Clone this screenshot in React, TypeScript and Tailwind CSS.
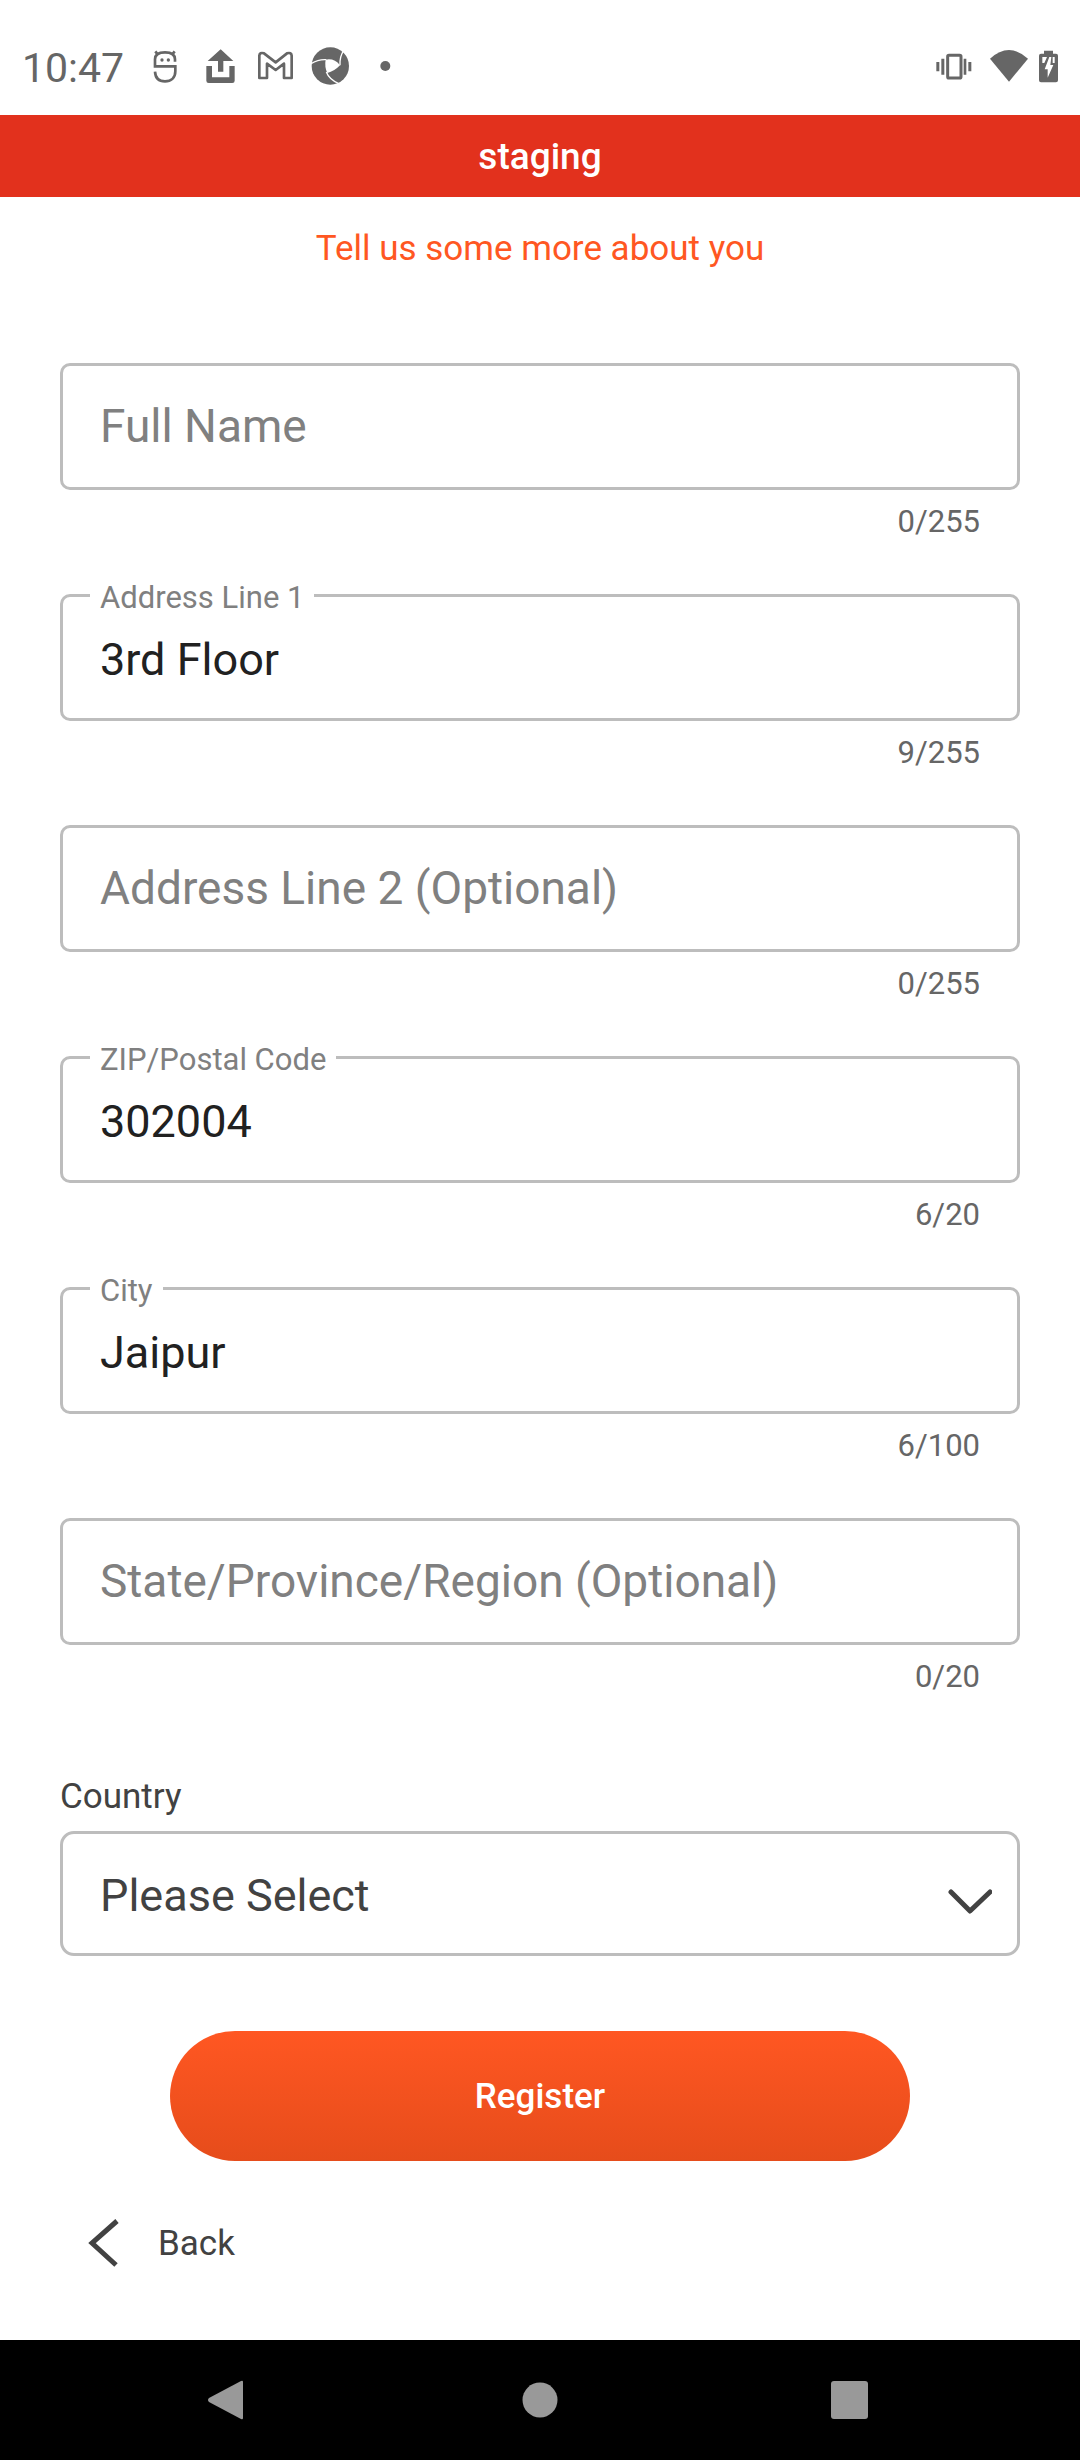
import { useState, type ReactNode } from "react";

type FieldData = { id: string; label: string; initial: string; max: number };

const fields: FieldData[] = [
  { id: "full-name", label: "Full Name", initial: "", max: 255 },
  { id: "address-1", label: "Address Line 1", initial: "3rd Floor", max: 255 },
  { id: "address-2", label: "Address Line 2 (Optional)", initial: "", max: 255 },
  { id: "postal-code", label: "ZIP/Postal Code", initial: "302004", max: 20 },
  { id: "city", label: "City", initial: "Jaipur", max: 100 },
  { id: "state", label: "State/Province/Region (Optional)", initial: "", max: 20 },
];

function StatusIcon({ children }: { children: ReactNode }) {
  return (
    <svg viewBox="0 0 117 117" className="size-[39px]" fill="none" aria-hidden="true">
      {children}
    </svg>
  );
}

function StatusBar() {
  return (
    <div className="flex h-[115px] items-center justify-between pt-4 pr-[22px] pl-[22px] text-[#666666]">
      <div className="flex items-center gap-4">
        <span className="w-[108px] pt-1 text-[41px] leading-[48px]">10:47</span>
        <StatusIcon>
          <g stroke="currentColor" strokeWidth="8">
            <path d="M87 47V40C87 26 76 19 57 19S27 26 27 40V61H88V76C88 95 75 106 57 106S28 96 27 77" />
            <path d="M28 16L35 25M86 16L79 25" />
          </g>
          <circle cx="48" cy="42" r="5" fill="currentColor" />
          <circle cx="67" cy="42" r="5" fill="currentColor" />
        </StatusIcon>
        <StatusIcon>
          <path
            fill="currentColor"
            d="M59 10L97 45H67V77H51V45H20ZM16 60H33V94H85V60H101V104Q101 111 94 111H23Q16 111 16 104Z"
          />
        </StatusIcon>
        <StatusIcon>
          <path
            d="M10 96V29Q11 18 24 22L59 49L93 22Q106 18 107 29V96H84V53L59 72L33 53V96Z"
            stroke="currentColor"
            strokeWidth="8"
            strokeLinejoin="round"
          />
        </StatusIcon>
        <StatusIcon>
          <circle cx="58" cy="60" r="56" fill="currentColor" />
          <path d="M44 41Q70 36 87 58Q70 76 49 81Q40 62 44 41Z" fill="white" />
          <g stroke="white" strokeWidth="4">
            <path d="M0 53C18 42 32 40 46 41" />
            <path d="M98 14C88 28 86 40 87 58" />
            <path d="M46 78C52 94 64 104 82 112" />
          </g>
        </StatusIcon>
        <StatusIcon>
          <circle cx="58" cy="60" r="15" fill="currentColor" />
        </StatusIcon>
      </div>
      <div className="flex items-center">
        <svg viewBox="0 0 108 117" className="mr-[18px] h-[39px] w-9" fill="currentColor" aria-hidden="true">
          <path d="M1 48H10V76H1ZM16 38H25V86H16ZM83 38H91V86H83ZM97 48H106V76H97Z" />
          <rect x="35" y="28" width="40" height="68" rx="4" fill="none" stroke="currentColor" strokeWidth="9" />
        </svg>
        <svg viewBox="0 0 114 117" className="mr-[11px] h-[39px] w-[38px]" fill="currentColor" aria-hidden="true">
          <path d="M0 38Q57 -14 114 38L57 107Z" />
        </svg>
        <svg viewBox="0 0 57 117" className="h-[39px] w-[19px]" fill="currentColor" aria-hidden="true">
          <path d="M15 14H42V23H51Q57 23 57 29V103Q57 109 51 109H6Q0 109 0 103V29Q0 23 6 23H15Z" />
          <path d="M10 33H24L16 51H10ZM41 33H47V51H41ZM37 33L34 57H43L26 95V70H17L31 33Z" fill="white" />
        </svg>
      </div>
    </div>
  );
}

function TextField({ id, label, initial, max }: FieldData) {
  const [value, setValue] = useState(initial);
  return (
    <div>
      <div className="relative">
        <input
          id={id}
          type="text"
          value={value}
          maxLength={max}
          onChange={(e) => setValue(e.target.value)}
          className="block h-[127px] w-full rounded-[10px] border-[3px] border-[#bdbdbd] bg-white px-[37px] pt-1 text-[45px] text-[#212121] outline-none"
        />
        <label
          htmlFor={id}
          className={
            value
              ? "pointer-events-none absolute -top-[14px] left-[30px] bg-white px-[10px] text-[31px] leading-9 text-[#808080]"
              : "pointer-events-none absolute inset-y-0 left-10 flex items-center text-[46px] text-[#808080]"
          }
        >
          {label}
        </label>
      </div>
      <p className="mt-[14px] pr-10 text-right text-[31px] leading-9 text-[#666666]">
        {value.length}/{max}
      </p>
    </div>
  );
}

function NavigationBar() {
  return (
    <nav className="grid h-[120px] grid-cols-[1fr_auto_1fr] items-center bg-black px-[205px] text-[#999999]">
      <button type="button" aria-label="Back" className="justify-self-start">
        <svg viewBox="0 0 40 40" className="size-10" fill="currentColor">
          <path d="M38 2V38Q38 40 36 39L4 22Q2 20 4 18L36 1Q38 0 38 2Z" />
        </svg>
      </button>
      <button type="button" aria-label="Home">
        <svg viewBox="0 0 40 40" className="size-10" fill="currentColor">
          <circle cx="20" cy="20" r="17.5" />
        </svg>
      </button>
      <button type="button" aria-label="Recent apps" className="justify-self-end pr-1">
        <svg viewBox="0 0 40 40" className="size-10" fill="currentColor">
          <rect x="0" y="1" width="37" height="38" rx="3" />
        </svg>
      </button>
    </nav>
  );
}

export default function App() {
  return (
    <div className="flex min-h-screen flex-col bg-white font-['Roboto',sans-serif]">
      <StatusBar />
      <header className="flex h-[82px] items-center justify-center bg-[#e2311d] pt-[2px] text-[37px] font-medium text-white">
        staging
      </header>
      <main className="flex-1 px-[60px] pt-8 text-[#424242]">
        <h1 className="text-center text-[35px] leading-10 text-[#ff5722]">Tell us some more about you</h1>
        <form onSubmit={(e) => e.preventDefault()}>
          <div className="mt-[94px] flex flex-col gap-[54px]">
            {fields.map((field) => (
              <TextField key={field.id} {...field} />
            ))}
          </div>
          <label htmlFor="country" className="mt-[82px] block text-[35px] leading-10">
            Country
          </label>
          <div className="relative mt-[14px]">
            <select
              id="country"
              className="block h-[125px] w-full appearance-none rounded-[14px] border-[3px] border-[#bdbdbd] bg-white px-[37px] pt-1 text-[45px] outline-none"
            >
              <option>Please Select</option>
            </select>
            <svg
              viewBox="0 0 44 26"
              className="pointer-events-none absolute top-[57px] right-7 h-[26px] w-11"
              fill="none"
              stroke="#424242"
              strokeWidth="5"
              strokeLinecap="round"
              strokeLinejoin="round"
              aria-hidden="true"
            >
              <path d="M3 4L22 23L42 4" />
            </svg>
          </div>
          <button
            type="submit"
            className="mx-[110px] mt-[75px] flex h-[130px] w-[calc(100%-220px)] items-center justify-center rounded-full bg-linear-to-b from-[#ff5722] to-[#e64c1b] pt-[2px] text-[35px] font-medium text-white"
          >
            Register
          </button>
        </form>
        <button type="button" className="mt-[57px] ml-7 flex items-center gap-[38px] text-[35px] leading-10">
          <svg viewBox="0 0 32 50" className="h-[50px] w-8" fill="none" stroke="#424242" strokeWidth="5" aria-hidden="true">
            <path d="M29 3L4 25L28 47" />
          </svg>
          <span className="pt-[2px]">Back</span>
        </button>
      </main>
      <NavigationBar />
    </div>
  );
}
